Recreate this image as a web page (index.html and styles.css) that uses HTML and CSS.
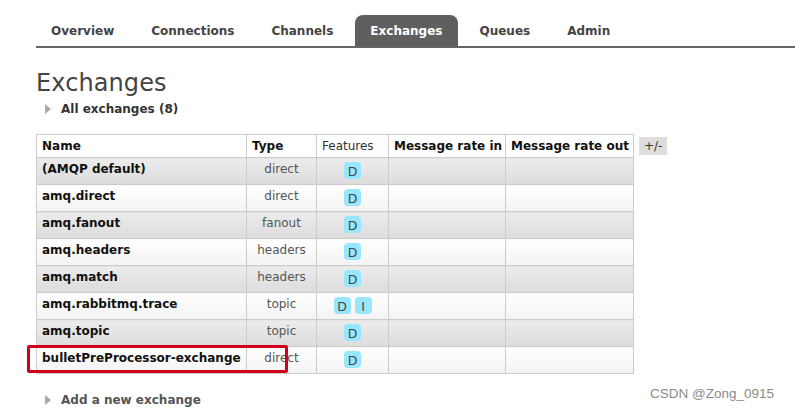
FILE: index.html
```html
<!DOCTYPE html>
<html>
<head>
<meta charset="utf-8">
<link rel="stylesheet" href="styles.css">
</head>
<body>
<div class="page">
  <ul class="tabs">
    <li class="tab">Overview</li>
    <li class="tab">Connections</li>
    <li class="tab">Channels</li>
    <li class="tab active">Exchanges</li>
    <li class="tab">Queues</li>
    <li class="tab">Admin</li>
  </ul>
  <h1 class="title">Exchanges</h1>
  <div class="section-toggle"><span class="arrow"></span>All exchanges (8)</div>
  <div class="table-wrap">
    <table class="list">
      <colgroup>
        <col class="c-name"><col class="c-type"><col class="c-feat"><col class="c-in"><col class="c-out">
      </colgroup>
      <thead>
        <tr>
          <th>Name</th>
          <th>Type</th>
          <th class="plain">Features</th>
          <th>Message rate in</th>
          <th>Message rate out</th>
        </tr>
      </thead>
      <tbody>
        <tr class="alt1"><td class="name">(AMQP default)</td><td class="type">direct</td><td class="feat"><span class="badge">D</span></td><td></td><td></td></tr>
        <tr class="alt2"><td class="name">amq.direct</td><td class="type">direct</td><td class="feat"><span class="badge">D</span></td><td></td><td></td></tr>
        <tr class="alt1"><td class="name">amq.fanout</td><td class="type">fanout</td><td class="feat"><span class="badge">D</span></td><td></td><td></td></tr>
        <tr class="alt2"><td class="name">amq.headers</td><td class="type">headers</td><td class="feat"><span class="badge">D</span></td><td></td><td></td></tr>
        <tr class="alt1"><td class="name">amq.match</td><td class="type">headers</td><td class="feat"><span class="badge">D</span></td><td></td><td></td></tr>
        <tr class="alt2"><td class="name">amq.rabbitmq.trace</td><td class="type">topic</td><td class="feat"><span class="badge">D</span><span class="badge">I</span></td><td></td><td></td></tr>
        <tr class="alt1"><td class="name">amq.topic</td><td class="type">topic</td><td class="feat"><span class="badge">D</span></td><td></td><td></td></tr>
        <tr class="alt2 marked"><td class="name">bulletPreProcessor-exchange<span class="highlight"></span></td><td class="type">direct</td><td class="feat"><span class="badge">D</span></td><td></td><td></td></tr>
      </tbody>
    </table>
    <span class="toggle-cols">+/-</span>
  </div>
  <div class="section-toggle add"><span class="arrow"></span>Add a new exchange</div>
</div>
<div class="watermark">CSDN @Zong_0915</div>
</body>
</html>
```

FILE: styles.css
```css
html, body {
  margin: 0;
  padding: 0;
  background: #fff;
}
body {
  font-family: "DejaVu Sans", Verdana, sans-serif;
  color: #484848;
  position: relative;
  width: 795px;
  height: 411px;
  overflow: hidden;
}
.page {
  padding: 15px 0 0 36px;
}
.tabs {
  list-style: none;
  margin: 0;
  padding: 0;
  display: flex;
  border-bottom: 2px solid #666;
  height: 31px;
}
.tab {
  font-size: 12px;
  font-weight: bold;
  color: #444;
  padding: 9px 16px 0 15px;
  margin-right: 6px;
  border-radius: 8px 8px 0 0;
}
.tab.active {
  background: #5f5f5f;
  color: #fff;
}
.title {
  font-weight: normal;
  font-size: 24px;
  color: #444;
  margin: 21px 0 0 0;
  line-height: 29px;
  letter-spacing: 0.1px;
}
.section-toggle {
  font-size: 12px;
  font-weight: bold;
  color: #333;
  display: flex;
  align-items: center;
  margin: 3px 0 0 9px;
  height: 16px;
}
.arrow {
  width: 0;
  height: 0;
  border-top: 5px solid transparent;
  border-bottom: 5px solid transparent;
  border-left: 6px solid #aaa;
  margin-right: 10px;
}
.table-wrap {
  margin-top: 17px;
  display: flex;
  align-items: flex-start;
}
.list {
  border-collapse: collapse;
  table-layout: fixed;
  width: 597px;
  font-size: 12px;
  border: 1px solid #ccc;
}
.list th, .list td {
  border: 1px solid #ccc;
  padding: 0 5px;
  height: 27px;
  box-sizing: border-box;
  white-space: nowrap;
  overflow: visible;
}
.list th {
  height: 23px;
  text-align: left;
  color: #111;
  background: #fff;
  padding: 0 4px 0 5px;
}
.list th.plain {
  font-weight: normal;
  color: #333;
}
.c-name { width: 210px; }
.c-type { width: 70px; }
.c-feat { width: 72px; }
.c-in { width: 117px; }
.c-out { width: 128px; }
.list td {
  vertical-align: top;
  padding-top: 4px;
  color: #555;
}
.list td.name {
  font-weight: bold;
  color: #111;
  position: relative;
}
.list td.type {
  text-align: center;
}
.list td.feat {
  text-align: center;
  padding: 4px 0 0 0;
}
.alt1 td {
  background: linear-gradient(#ececec, #dcdcdc);
}
.alt2 td {
  background: linear-gradient(#ffffff, #f3f3f3);
}
.badge {
  display: inline-block;
  background: #99e6ff;
  color: #444;
  border-radius: 4px;
  padding: 2px 3px 1px 3px;
  min-width: 11px;
  height: 14px;
  line-height: 15px;
  font-size: 12.5px;
  margin: 0 2px;
}
.toggle-cols {
  margin: 3px 0 0 5px;
  background: #ddd;
  color: #333;
  font-size: 12px;
  padding: 2px 5px;
  line-height: 14px;
}
.add {
  margin-top: 18px;
  color: #555;
}
.highlight {
  position: absolute;
  left: -10px;
  top: -2px;
  width: 255px;
  height: 22px;
  border: 3px solid #d0021b;
  border-radius: 2px;
  pointer-events: none;
}
.watermark {
  position: absolute;
  left: 650px;
  top: 386px;
  font-family: "Liberation Sans", Arial, sans-serif;
  font-size: 13.5px;
  color: #8a8a8a;
}
```
